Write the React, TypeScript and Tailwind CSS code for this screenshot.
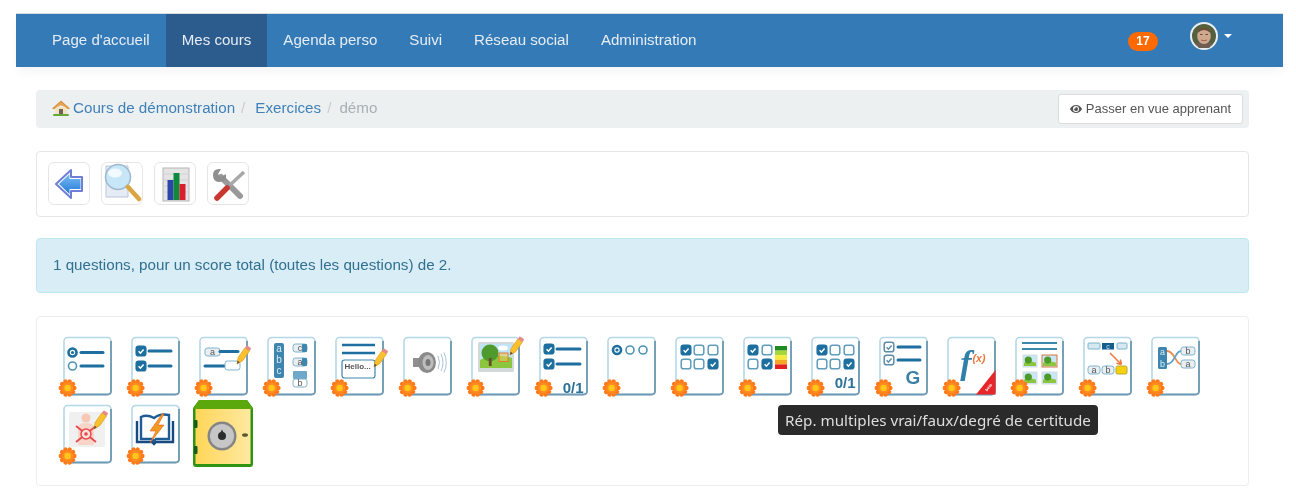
import type { ReactNode } from 'react';
import { FaEye } from 'react-icons/fa';

const BLUE = '#1c6f9e';
const LIGHT = '#7fb2cc';

const navItems = ['Page d\'accueil', 'Mes cours', 'Agenda perso', 'Suivi', 'Réseau social', 'Administration'];

// orange flower in the bottom left corner of every question type
const Star = () => (
  <g transform="translate(.6 0)">
    {[0, 36, 72, 108, 144].map((a) => (
      <rect key={a} x="1" y="52.800" width="18" height="4.400" rx="2.200" fill="#ff7a1a" transform={`rotate(${a} 10 55)`} />
    ))}
    <circle cx="10" cy="55" r="5.800" fill="#ff8a1f" />
    <circle cx="10" cy="55" r="3.200" fill="#ffc61a" />
  </g>
);

const Radio = ({ x, y, on }: { x: number; y: number; on?: boolean }) => (
  <g>
    <circle cx={x} cy={y} r="4" fill="#fff" stroke={on ? BLUE : '#4f93b5'} strokeWidth={on ? 2.6 : 1.6} />
    {on && <circle cx={x} cy={y} r="1.600" fill={BLUE} />}
  </g>
);

const Check = ({ x, y, on, pale }: { x: number; y: number; on?: boolean; pale?: boolean }) => (
  <g>
    <rect x={x - 4.8} y={y - 4.8} width="9.600" height="9.600" rx="2.400" fill={on && !pale ? BLUE : '#fff'} stroke={pale ? '#5d8ca8' : on ? BLUE : '#5f9dbd'} strokeWidth="1.500" />
    {on && <path d={`M${x - 2.4} ${y + 0.3}l1.800 1.900 3.200-3.800`} fill="none" stroke={pale ? '#5d8ca8' : '#fff'} strokeWidth="1.500" />}
  </g>
);

const Line = ({ x1, x2, y }: { x1: number; x2: number; y: number }) => (
  <line x1={x1} x2={x2} y1={y} y2={y} stroke={BLUE} strokeWidth="3" strokeLinecap="round" />
);

const Pencil = ({ x, y, scale = 1 }: { x: number; y: number; scale?: number }) => (
  <g transform={`translate(${x} ${y}) rotate(35) scale(${scale})`}>
    <path d="M0 0l-2.800 -6v-12h5.600v12z" fill="#fbc02d" stroke="#d99a1c" strokeWidth=".6" />
    <path d="M0 0l-1.300 -3h2.600z" fill="#5a4a3a" />
    <rect x="-2.800" y="-21" width="5.600" height="3.400" rx="1" fill="#e58a8a" />
  </g>
);

const Cell = ({ x, y, w, h, label, fill = '#e9eef1' }: { x: number; y: number; w: number; h: number; label?: string; fill?: string }) => (
  <g>
    <rect x={x} y={y} width={w} height={h} rx="2.500" fill={fill} stroke={LIGHT} strokeWidth="1" />
    {label && <text x={x + w / 2} y={y + h - 1.4} textAnchor="middle" fontSize="9" fill="#555" fontFamily="Liberation Sans, sans-serif">{label}</text>}
  </g>
);

const Score = ({ y }: { y: number }) => (
  <text x="50.500" y={y} textAnchor="end" fontSize="15" fontWeight="700" fill="#2d7399" fontFamily="Liberation Sans, sans-serif">0/1</text>
);

const Photo = ({ x, y, w, h, border }: { x: number; y: number; w: number; h: number; border?: boolean }) => (
  <g>
    <rect x={x} y={y} width={w} height={h} fill="#c9e6f7" stroke={border ? '#d9763a' : '#d5dde2'} strokeWidth="1" />
    <path d={`M${x + 1} ${y + h * 0.65}q${w * 0.4} -${h * 0.25} ${w - 2} 0v${h * 0.35 - 1}h-${w - 2}z`} fill="#8cc63f" />
    <circle cx={x + w * 0.38} cy={y + h * 0.42} r={h * 0.3} fill="#4d9a2a" />
  </g>
);

// page with the light border and the darker edge on the right and bottom
const Sheet = ({ children }: { children?: ReactNode }) => (
  <svg width="60" height="66" viewBox="0 0 60 66" className="overflow-visible">
    <rect x="7" y="4.500" width="47" height="57" rx="3.500" fill="#fff" stroke="#b5d8e8" strokeWidth="1.600" />
    <path d="M54 8v50q0 3.500-3.500 3.500H14" fill="none" stroke="#6f9ab3" strokeWidth="1.800" />
    {children}
    <Star />
  </svg>
);

const questionIcons: ReactNode[] = [
  <Sheet key="q1">
    <Radio x={15.5} y={19.5} on /><Radio x={15.5} y={33} />
    <Line x1={24} x2={46} y={19.5} /><Line x1={24} x2={46} y={33} />
  </Sheet>,
  <Sheet key="q2">
    <Check x={16} y={18} on /><Check x={16} y={33} on />
    <Line x1={24} x2={46} y={18} /><Line x1={24} x2={46} y={33} />
  </Sheet>,
  <Sheet key="q3">
    <Cell x={12} y={15} w={15} h={8} label="a" />
    <Line x1={27} x2={45} y={18.5} /><Line x1={12} x2={32} y={33} />
    <rect x="32" y="28" width="15" height="9" rx="2.500" fill="#fff" stroke={LIGHT} />
    <Pencil x={44} y={31} />
  </Sheet>,
  <Sheet key="q4">
    <rect x="13" y="10" width="10" height="35" rx="2" fill="#3e86ad" />
    {['a', 'b', 'c'].map((l, i) => (
      <text key={l} x="18" y={19 + i * 11} textAnchor="middle" fontSize="10" fill="#d9ebf3" fontFamily="Liberation Sans, sans-serif">{l}</text>
    ))}
    <Cell x={32} y={11} w={14} h={8} label="c" /><rect x="41" y="11" width="5" height="8" rx="1" fill="#3e86ad" />
    <Cell x={32} y={25} w={14} h={8} label="a" /><rect x="41" y="25" width="5" height="8" rx="1" fill="#3e86ad" />
    <rect x="32" y="38" width="14" height="8" rx="1" fill="#6fa8c8" />
    <Cell x={32} y={46} w={14} h={8} label="b" fill="#fff" />
  </Sheet>,
  <Sheet key="q5">
    <line x1="13" x2="46" y1="12" y2="12" stroke={BLUE} strokeWidth="2.600" />
    <line x1="13" x2="46" y1="20" y2="20" stroke={BLUE} strokeWidth="2.600" />
    <rect x="13" y="27" width="33" height="18" rx="2.500" fill="#fff" stroke="#3e86ad" strokeWidth="1.200" />
    <text x="15.500" y="35.500" fontSize="8" fontWeight="700" fill="#555" fontFamily="Liberation Sans, sans-serif">Hello...</text>
    <Pencil x={45} y={34} />
  </Sheet>,
  <Sheet key="q6">
    <path d="M16 25h7l8-6v21l-8-6h-7z" fill="#8f8f8f" />
    <ellipse cx="30" cy="29.500" rx="9" ry="10.500" fill="#8a8a8a" />
    <ellipse cx="31" cy="29.500" rx="5.500" ry="7.500" fill="#bdbdbd" />
    <ellipse cx="31" cy="29.500" rx="2.500" ry="3.500" fill="#777" />
    <path d="M41 23q3 6.500 0 13M44 21q4 8.500 0 17M47 19.500q4.500 10 0 20" fill="none" stroke="#a9c3d4" strokeWidth="1" />
  </Sheet>,
  <Sheet key="q7">
    <rect x="13" y="9" width="36" height="30" rx="1.500" fill="#d3d8da" />
    <rect x="15" y="11" width="32" height="24" fill="#bfe4f7" />
    <ellipse cx="38" cy="15" rx="5" ry="2.500" fill="#fff" />
    <path d="M15 27q14-8 32-2v10H15z" fill="#8cc63f" />
    <circle cx="25" cy="20" r="8.500" fill="#4f9a2c" />
    <rect x="23.800" y="25" width="2.800" height="8" fill="#6b4a2a" />
    <rect x="34" y="20" width="9" height="8.500" fill="#e8cc5a" fillOpacity=".6" stroke="#dd7a33" strokeWidth="1" />
    <Pencil x={45} y={22} />
  </Sheet>,
  <Sheet key="q8">
    <Check x={16} y={16} on /><Check x={16} y={31} on />
    <Line x1={24} x2={47} y={16} /><Line x1={24} x2={47} y={31} />
    <Score y={60} />
  </Sheet>,
  <Sheet key="q9">
    <Radio x={16} y={17} on /><Radio x={29} y={17} /><Radio x={42} y={17} />
  </Sheet>,
  <Sheet key="q10">
    <Check x={17} y={17} on /><Check x={30} y={17} /><Check x={44} y={17} />
    <Check x={17} y={31} /><Check x={30} y={31} /><Check x={44} y={31} on />
  </Sheet>,
  <Sheet key="q11">
    <Check x={16} y={17} on /><Check x={30} y={17} />
    <Check x={16} y={31} /><Check x={30} y={31} on />
    {['#1f8a1f', '#a5d63a', '#f4ea3a', '#f7a823', '#e31e1e'].map((c, i) => (
      <rect key={c} x="38" y={13 + i * 4.6} width="12" height="4.600" fill={c} />
    ))}
  </Sheet>,
  <Sheet key="q12">
    <Check x={17} y={17} on /><Check x={30} y={17} /><Check x={44} y={17} />
    <Check x={17} y={31} /><Check x={30} y={31} /><Check x={44} y={31} on />
    <Score y={55} />
  </Sheet>,
  <Sheet key="q13">
    <Check x={16} y={14} on pale /><Check x={16} y={27} on pale />
    <Line x1={25} x2={47} y={14} /><Line x1={25} x2={47} y={27} />
    <text x="40" y="51" textAnchor="middle" fontSize="19" fontWeight="700" fill="#3d80a6" fontFamily="Liberation Sans, sans-serif">G</text>
  </Sheet>,
  <Sheet key="q14">
    <text x="25" y="41" textAnchor="middle" fontSize="34" fontStyle="italic" fontWeight="700" fill="#2f7fa8" fontFamily="Liberation Serif, serif">f</text>
    <text x="38" y="29" textAnchor="middle" fontSize="10.500" fontStyle="italic" fontWeight="700" fill="#f0783c" fontFamily="Liberation Sans, sans-serif">(x)</text>
    <path d="M54.500 37v24.500H35z" fill="#e8262a" />
    <text x="47" y="56" textAnchor="middle" fontSize="4" fontWeight="700" fill="#fff" transform="rotate(-50 47 54)" fontFamily="Liberation Sans, sans-serif">beta</text>
  </Sheet>,
  <Sheet key="q15">
    <line x1="13" x2="48" y1="10" y2="10" stroke="#3a89ad" strokeWidth="2.200" />
    <line x1="13" x2="48" y1="16" y2="16" stroke="#3a89ad" strokeWidth="2.200" />
    <Photo x={14} y={22} w={14} h={12} /><Photo x={33} y={22} w={15} h={12} border />
    <Photo x={14} y={39} w={14} h={12} /><Photo x={33} y={39} w={15} h={12} />
  </Sheet>,
  <Sheet key="q16">
    <rect x="11" y="10" width="12" height="6" rx="1" fill="#d6e8f1" stroke={LIGHT} />
    <rect x="25" y="10" width="12" height="6.500" fill="#145f8f" />
    <text x="31" y="15.500" textAnchor="middle" fontSize="7" fill="#cfe3ee" fontFamily="Liberation Sans, sans-serif">c</text>
    <rect x="40" y="10" width="10" height="6" rx="1" fill="#d6e8f1" stroke={LIGHT} />
    <path d="M33 20l11 11M44.500 31.500l-5-1.200M44.500 31.500l-1.200-5" fill="none" stroke="#ef7a3c" strokeWidth="1.500" />
    <Cell x={11} y={33} w={12} h={8} label="a" /><Cell x={25} y={33} w={12} h={8} label="b" />
    <rect x="39" y="33" width="11" height="8" rx="1.500" fill="#f5d20f" stroke="#b9a73a" />
  </Sheet>,
  <Sheet key="q17">
    <rect x="13" y="14" width="9" height="22" rx="1.500" fill="#3e86ad" />
    <text x="17.500" y="21.500" textAnchor="middle" fontSize="9" fill="#dcecf4" fontFamily="Liberation Sans, sans-serif">a</text>
    <text x="17.500" y="33.500" textAnchor="middle" fontSize="9" fill="#dcecf4" fontFamily="Liberation Sans, sans-serif">b</text>
    <path d="M22 18c8 0 8 13 14 13" fill="none" stroke="#f08a4a" strokeWidth="1.800" />
    <path d="M22 31c8 0 8-13 14-13" fill="none" stroke="#5fa3c6" strokeWidth="1.800" />
    <Cell x={36} y={14} w={14} h={8} label="b" /><Cell x={36} y={27} w={14} h={8} label="a" />
  </Sheet>,
  <Sheet key="q18">
    <rect x="12" y="11" width="36" height="35" rx="2" fill="#f0f0f0" />
    <circle cx="29" cy="17" r="4.500" fill="#f5c9b5" />
    <path d="M21 44V27q0-5 8-5t8 5v17z" fill="#f8d5c6" />
    <path d="M19 25l20 16M39 25L19 41" stroke="#e8484d" strokeWidth="1.800" />
    <circle cx="29" cy="33" r="5" fill="#fbe3da" stroke="#e8484d" strokeWidth="1.500" />
    <circle cx="29" cy="33" r="1.800" fill="#e8484d" />
    <Pencil x={37} y={28} />
  </Sheet>,
  <Sheet key="q19">
    <path d="M16 16q6-3 13 1 6-5 15-3v24H31l-2 2-2-2H16z" fill="#fff" stroke="#1e5c96" strokeWidth="2.400" />
    <path d="M12 20v21h15l2 2 2-2h17V20" fill="none" stroke="#174a80" strokeWidth="2.400" />
    <path d="M37 13L25 30h6l-6 12 14-18h-6l6-11z" fill="#f39a22" stroke="#e0601e" strokeWidth=".6" />
  </Sheet>,
  <svg key="safe" width="60" height="67" viewBox="0 0 60 67" className="-mt-px overflow-visible">
    <defs>
      <linearGradient id="safeDoor" x1="0" x2="1" y1="0" y2="0">
        <stop offset="0" stopColor="#ffd659" />
        <stop offset="1" stopColor="#ffe9a0" />
      </linearGradient>
    </defs>
    <path d="M6 0h48l6 8v56q0 3-3 3H3q-3 0-3-3V8z" fill="#2f9412" />
    <path d="M6 0h48l6 9H0z" fill="#5aa80c" />
    <rect x="2.500" y="9" width="55" height="55" fill="url(#safeDoor)" />
    <rect x="1" y="20" width="3.500" height="8" rx="1" fill="#155c1a" />
    <rect x="1" y="46" width="3.500" height="8" rx="1" fill="#155c1a" />
    <circle cx="29" cy="36" r="14.500" fill="#858585" />
    <circle cx="29" cy="36" r="12" fill="#c6c6c6" />
    <circle cx="29" cy="36" r="4" fill="#2c2c2c" />
    <path d="M29 29.500l3 6h-6z" fill="#2c2c2c" />
    <ellipse cx="52" cy="35" rx="3" ry="1.800" fill="#5a5a32" />
  </svg>,
];

const Avatar = () => (
  <svg width="28" height="28" viewBox="0 0 28 28">
    <circle cx="14" cy="14" r="13" fill="#55603f" stroke="#e8eef2" strokeWidth="2" />
    <path d="M5 22q9-6 18 0l-4 4h-10z" fill="#6e5d52" />
    <ellipse cx="14" cy="14" rx="6.800" ry="8" fill="#d0a890" />
    <path d="M7.500 11q6.500-6 13 0l-1-4q-5.500-3-11 0z" fill="#6a5034" />
    <path d="M10 12.500h2.500M15.500 12.500h2.500" stroke="#6a4a3a" strokeWidth="1" />
    <path d="M11 18q3 1.500 6 0" stroke="#a0604f" strokeWidth="1" fill="none" />
  </svg>
);

const HomeIcon = () => (
  <svg width="18" height="16" viewBox="0 0 18 16">
    <path d="M3 7h12v7H3z" fill="#f3e3c0" />
    <path d="M0 8.500L9 0.500l9 8-2 .8L9 3.500 2 9.300z" fill="#d9913a" />
    <path d="M2 8L9 2l7 6-7-2.500z" fill="#e6a55a" />
    <path d="M7 9h4v5H7z" fill="#6f6258" />
    <rect x="1" y="14" width="16" height="2" rx="1" fill="#66a838" />
  </svg>
);

const toolIcons: ReactNode[] = [
  <svg key="back" width="40" height="41" viewBox="0 0 40 41">
    <defs>
      <linearGradient id="backArrow" x1="0" x2="0" y1="0" y2="1">
        <stop offset="0" stopColor="#7dbdf2" />
        <stop offset="1" stopColor="#1f7ad8" />
      </linearGradient>
    </defs>
    <path d="M7 21L22 7v7h11v14H22v7z" fill="#fff" stroke="#6d7fd6" strokeWidth="2" strokeLinejoin="round" />
    <path d="M10 21l10.500-10v5h11v10h-11v5z" fill="url(#backArrow)" />
  </svg>,
  <svg key="search" width="40" height="41" viewBox="0 0 40 41">
    <path d="M4 3h22v31H4z" fill="#e6ecf6" stroke="#b9c6dc" />
    <circle cx="16" cy="14" r="12.500" fill="#c7e6f8" stroke="#9fb8cc" strokeWidth="1.500" />
    <ellipse cx="13" cy="10" rx="7" ry="4.500" fill="#f1fafe" />
    <line x1="26" y1="24" x2="37" y2="36" stroke="#d9a441" strokeWidth="4.500" strokeLinecap="round" />
  </svg>,
  <svg key="stats" width="40" height="41" viewBox="0 0 40 41">
    <rect x="8" y="5" width="26" height="33" fill="#e4e4e4" stroke="#b5b5b5" />
    <path d="M8 11h26M8 17h26M8 23h26M8 29h26" stroke="#d2d2d2" />
    <rect x="12.500" y="17" width="6" height="20" fill="#2c46a8" />
    <rect x="18.500" y="10" width="6" height="27" fill="#0f8a3c" />
    <rect x="24.500" y="21" width="6" height="16" fill="#d8202c" />
  </svg>,
  <svg key="tools" width="40" height="41" viewBox="0 0 40 41">
    <line x1="13" y1="14" x2="32" y2="33" stroke="#999" strokeWidth="6" strokeLinecap="round" />
    <path d="M5 12q0-7 8-6l-3 5 3 3 5-3q1 8-7 8-6 0-6-7z" fill="#8f8f8f" />
    <line x1="36" y1="9" x2="22" y2="22" stroke="#a8a8a8" strokeWidth="3.500" />
    <line x1="19" y1="25" x2="9" y2="35" stroke="#c8382e" strokeWidth="5.500" strokeLinecap="round" />
  </svg>,
];

export default function App() {
  return (
    <div className="h-[494px] overflow-hidden bg-white pt-[13px] font-['Liberation_Sans',Arial,sans-serif] text-[15.2px] blur-[0.4px]">
      <div className="ml-4 w-[1267px]">
        <nav className="flex h-[54px] items-stretch border-t border-[#d8dde2] bg-[#337ab7] pl-5 pr-[51px] text-[15.1px] shadow-[0_6px_10px_-2px_rgba(0,0,0,0.05)]">
          {navItems.map((item) => (
            <a key={item} href="#" className={`flex items-center px-4 pb-[1px] text-[#e6edf4] ${item === 'Mes cours' ? 'bg-[#2c5c8e]' : ''}`}>
              {item}
            </a>
          ))}
          <div className="ml-auto flex items-center">
            <span className="mt-[1px] flex h-[19px] w-[30px] items-center justify-center rounded-full bg-[#ff6a00] text-xs font-bold text-white">17</span>
            <span className="mb-[9px] ml-[32px]"><Avatar /></span>
            <span className="mb-[9px] ml-[6px] h-0 w-0 border-x-4 border-t-4 border-x-transparent border-t-white" />
          </div>
        </nav>

        <div className="ml-5 w-[1213px]">
          <div className="mt-[23px] flex h-[38px] items-center rounded bg-[#ecf0f1] pb-[2px] pl-4 pr-[6px]">
            <HomeIcon />
            <a href="#" className="ml-[3px] text-[#3f80b9]">Cours de démonstration</a>
            <span className="px-[6px] text-[#ccc]">/</span>
            <a href="#" className="ml-[4px] text-[#3f80b9]">Exercices</a>
            <span className="px-[6px] text-[#ccc]">/</span>
            <span className="ml-[2px] text-[#a8afb3]">démo</span>
            <button className="ml-auto mt-[2px] flex h-[30px] w-[185px] items-center justify-center gap-1 rounded-[3px] border border-[#dcdcdc] bg-white text-[13px] text-[#555]">
              <FaEye className="text-[12px]" />
              Passer en vue apprenant
            </button>
          </div>

          <div className="mt-[23px] flex h-[66px] items-center gap-[11px] rounded border border-[#e6e6e6] pb-[1px] pl-[11px]">
            {toolIcons.map((icon, i) => (
              <a key={i} href="#" className="flex h-[43px] w-[42px] items-center justify-center rounded-md border border-[#e6e6e6] bg-white">
                {icon}
              </a>
            ))}
          </div>

          <div className="mt-[21px] flex h-[55px] items-center rounded border border-[#bce8f1] bg-[#d9edf7] pl-4 text-[#31708f]">
            1 questions, pour un score total (toutes les questions) de 2.
          </div>

          <div className="relative mt-[23px] flex h-[170px] flex-wrap content-start rounded border border-[#eeeeee] pl-5 pt-4">
            {questionIcons.map((icon, i) => (
              <a key={i} href="#" className="block h-[68px] w-[68px]">
                {icon}
              </a>
            ))}
            <div className="absolute left-[741px] top-[88px] flex h-[30px] w-[320px] items-center justify-center rounded bg-[#2a2a2a] font-['Noto_Sans',sans-serif] text-[15.2px] text-[#dedede]">
              Rép. multiples vrai/faux/degré de certitude
            </div>
          </div>
        </div>
      </div>
    </div>
  );
}
